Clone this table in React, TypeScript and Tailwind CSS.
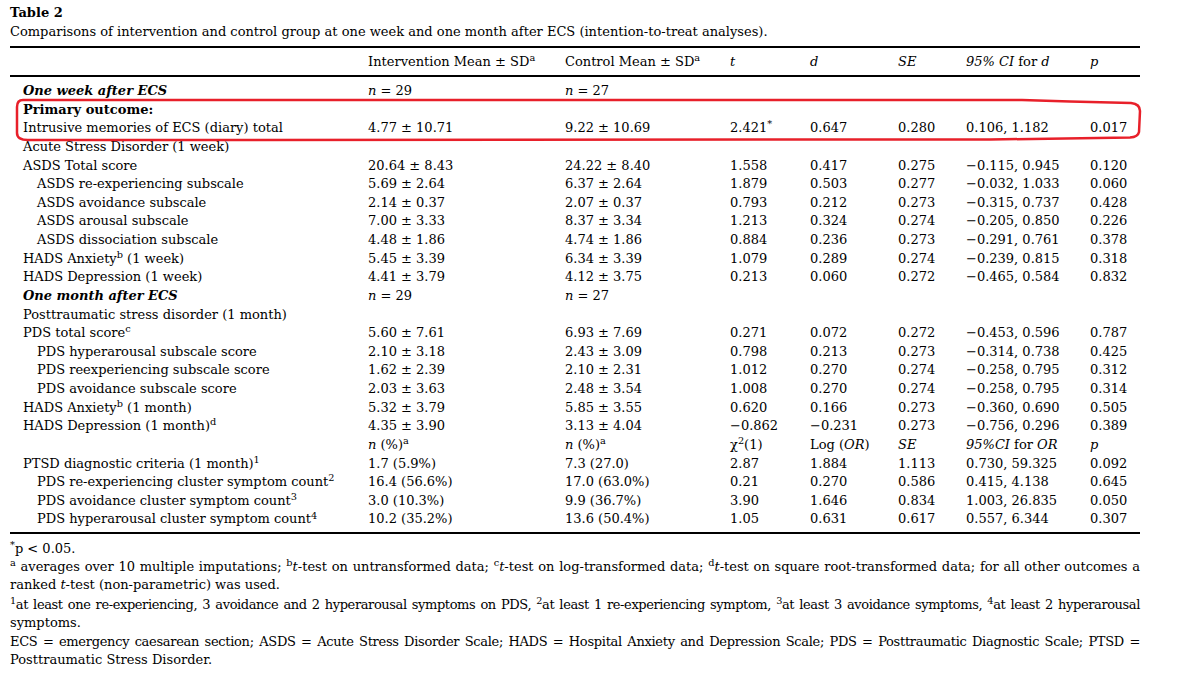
import type { ReactNode } from "react";

type Row = {
  label?: ReactNode;
  indent?: boolean;
  cells?: ReactNode[];
};

const M = "\u2212";

const I = ({ children }: { children: ReactNode }) => <i>{children}</i>;
const N = (v: number) => <><I>n</I> = {v}</>;

const rows: Row[] = [
  { label: <b><i>One week after ECS</i></b>, cells: [N(29), N(27)] },
  { label: <b>Primary outcome:</b> },
  { label: "Intrusive memories of ECS (diary) total", cells: ["4.77 ± 10.71", "9.22 ± 10.69", <>2.421<sup>*</sup></>, "0.647", "0.280", "0.106, 1.182", "0.017"] },
  { label: "Acute Stress Disorder (1 week)" },
  { label: "ASDS Total score", cells: ["20.64 ± 8.43", "24.22 ± 8.40", "1.558", "0.417", "0.275", `${M}0.115, 0.945`, "0.120"] },
  { label: "ASDS re-experiencing subscale", indent: true, cells: ["5.69 ± 2.64", "6.37 ± 2.64", "1.879", "0.503", "0.277", `${M}0.032, 1.033`, "0.060"] },
  { label: "ASDS avoidance subscale", indent: true, cells: ["2.14 ± 0.37", "2.07 ± 0.37", "0.793", "0.212", "0.273", `${M}0.315, 0.737`, "0.428"] },
  { label: "ASDS arousal subscale", indent: true, cells: ["7.00 ± 3.33", "8.37 ± 3.34", "1.213", "0.324", "0.274", `${M}0.205, 0.850`, "0.226"] },
  { label: "ASDS dissociation subscale", indent: true, cells: ["4.48 ± 1.86", "4.74 ± 1.86", "0.884", "0.236", "0.273", `${M}0.291, 0.761`, "0.378"] },
  { label: <>HADS Anxiety<sup>b</sup> (1 week)</>, cells: ["5.45 ± 3.39", "6.34 ± 3.39", "1.079", "0.289", "0.274", `${M}0.239, 0.815`, "0.318"] },
  { label: "HADS Depression (1 week)", cells: ["4.41 ± 3.79", "4.12 ± 3.75", "0.213", "0.060", "0.272", `${M}0.465, 0.584`, "0.832"] },
  { label: <b><i>One month after ECS</i></b>, cells: [N(29), N(27)] },
  { label: "Posttraumatic stress disorder (1 month)" },
  { label: <>PDS total score<sup>c</sup></>, cells: ["5.60 ± 7.61", "6.93 ± 7.69", "0.271", "0.072", "0.272", `${M}0.453, 0.596`, "0.787"] },
  { label: "PDS hyperarousal subscale score", indent: true, cells: ["2.10 ± 3.18", "2.43 ± 3.09", "0.798", "0.213", "0.273", `${M}0.314, 0.738`, "0.425"] },
  { label: "PDS reexperiencing subscale score", indent: true, cells: ["1.62 ± 2.39", "2.10 ± 2.31", "1.012", "0.270", "0.274", `${M}0.258, 0.795`, "0.312"] },
  { label: "PDS avoidance subscale score", indent: true, cells: ["2.03 ± 3.63", "2.48 ± 3.54", "1.008", "0.270", "0.274", `${M}0.258, 0.795`, "0.314"] },
  { label: <>HADS Anxiety<sup>b</sup> (1 month)</>, cells: ["5.32 ± 3.79", "5.85 ± 3.55", "0.620", "0.166", "0.273", `${M}0.360, 0.690`, "0.505"] },
  { label: <>HADS Depression (1 month)<sup>d</sup></>, cells: ["4.35 ± 3.90", "3.13 ± 4.04", `${M}0.862`, `${M}0.231`, "0.273", `${M}0.756, 0.296`, "0.389"] },
  {
    label: "",
    cells: [
      <><I>n</I> (%)<sup>a</sup></>,
      <><I>n</I> (%)<sup>a</sup></>,
      <>χ<sup>2</sup>(1)</>,
      <>Log (<I>OR</I>)</>,
      <I>SE</I>,
      <><I>95%CI</I> for <I>OR</I></>,
      <I>p</I>,
    ],
  },
  { label: <>PTSD diagnostic criteria (1 month)<sup>1</sup></>, cells: ["1.7 (5.9%)", "7.3 (27.0)", "2.87", "1.884", "1.113", "0.730, 59.325", "0.092"] },
  { label: <>PDS re-experiencing cluster symptom count<sup>2</sup></>, indent: true, cells: ["16.4 (56.6%)", "17.0 (63.0%)", "0.21", "0.270", "0.586", "0.415, 4.138", "0.645"] },
  { label: <>PDS avoidance cluster symptom count<sup>3</sup></>, indent: true, cells: ["3.0 (10.3%)", "9.9 (36.7%)", "3.90", "1.646", "0.834", "1.003, 26.835", "0.050"] },
  { label: <>PDS hyperarousal cluster symptom count<sup>4</sup></>, indent: true, cells: ["10.2 (35.2%)", "13.6 (50.4%)", "1.05", "0.631", "0.617", "0.557, 6.344", "0.307"] },
];

const cols = "grid grid-cols-[345px_197px_165px_80px_88px_68px_124px_50px] pl-[13px]";

export default function App() {
  return (
    <div className="relative w-[1184px] h-[692px] bg-white text-black font-['DejaVu_Serif',serif] text-[13px] overflow-hidden">
      <div className="px-[10px] pt-[4px]">
        <div className="font-bold leading-[18px]">Table 2</div>
        <div className="leading-[19px]">
          Comparisons of intervention and control group at one week and one month after ECS (intention-to-treat analyses).
        </div>

        {/* table */}
        <div className="mt-[5px] w-[1130px] border-t-2 border-b-[2.5px] border-black">
          <div className={`${cols} h-[29px] items-center border-b-2 border-black`}>
            <span />
            <span>Intervention Mean ± SD<sup>a</sup></span>
            <span>Control Mean ± SD<sup>a</sup></span>
            <span><I>t</I></span>
            <span><I>d</I></span>
            <span><I>SE</I></span>
            <span><I>95% CI</I> for <I>d</I></span>
            <span><I>p</I></span>
          </div>
          <div className="pt-[5px] pb-[3px]">
            {rows.map((r, i) => (
              <div key={i} className={`${cols} h-[18.63px] leading-[18.63px] whitespace-nowrap`}>
                <span className={r.indent ? "pl-[14px]" : ""}>{r.label}</span>
                {Array.from({ length: 7 }).map((_, j) => (
                  <span key={j}>{r.cells?.[j] ?? ""}</span>
                ))}
              </div>
            ))}
          </div>
        </div>

        {/* footnotes */}
        <div className="w-[1130px] leading-[18px] mt-[6px]">
          <p><sup>*</sup>p &lt; 0.05.</p>
          <p className="text-justify [text-align-last:justify]">
            <sup>a</sup> averages over 10 multiple imputations; <sup>b</sup><I>t</I>-test on untransformed data; <sup>c</sup><I>t</I>-test on log-transformed data; <sup>d</sup><I>t</I>-test on square root-transformed data; for all other outcomes a
          </p>
          <p>ranked <I>t</I>-test (non-parametric) was used.</p>
          <p className="mt-[2px] text-justify [text-align-last:justify] tracking-[-0.4px]">
            <sup>1</sup>at least one re-experiencing, 3 avoidance and 2 hyperarousal symptoms on PDS, <sup>2</sup>at least 1 re-experiencing symptom, <sup>3</sup>at least 3 avoidance symptoms, <sup>4</sup>at least 2 hyperarousal
          </p>
          <p>symptoms.</p>
          <p className="mt-[1px] text-justify [text-align-last:justify] tracking-[-0.3px] whitespace-nowrap">
            ECS = emergency caesarean section; ASDS = Acute Stress Disorder Scale; HADS = Hospital Anxiety and Depression Scale; PDS = Posttraumatic Diagnostic Scale; PTSD =
          </p>
          <p>Posttraumatic Stress Disorder.</p>
        </div>
      </div>

      {/* hand-drawn highlight */}
      <svg className="absolute inset-0 pointer-events-none" width="1184" height="692">
        <path
          d="M23 100 L1022 100 L1070 101.5 L1131 103 Q1140 104 1140 111 L1139 132 Q1138 137 1130 137.5 L990 139.5 L28 140 Q17 140 17 133 L17 107 Q17 100 23 100 Z"
          fill="none"
          stroke="#e8202a"
          strokeWidth="2.5"
        />
      </svg>
    </div>
  );
}
